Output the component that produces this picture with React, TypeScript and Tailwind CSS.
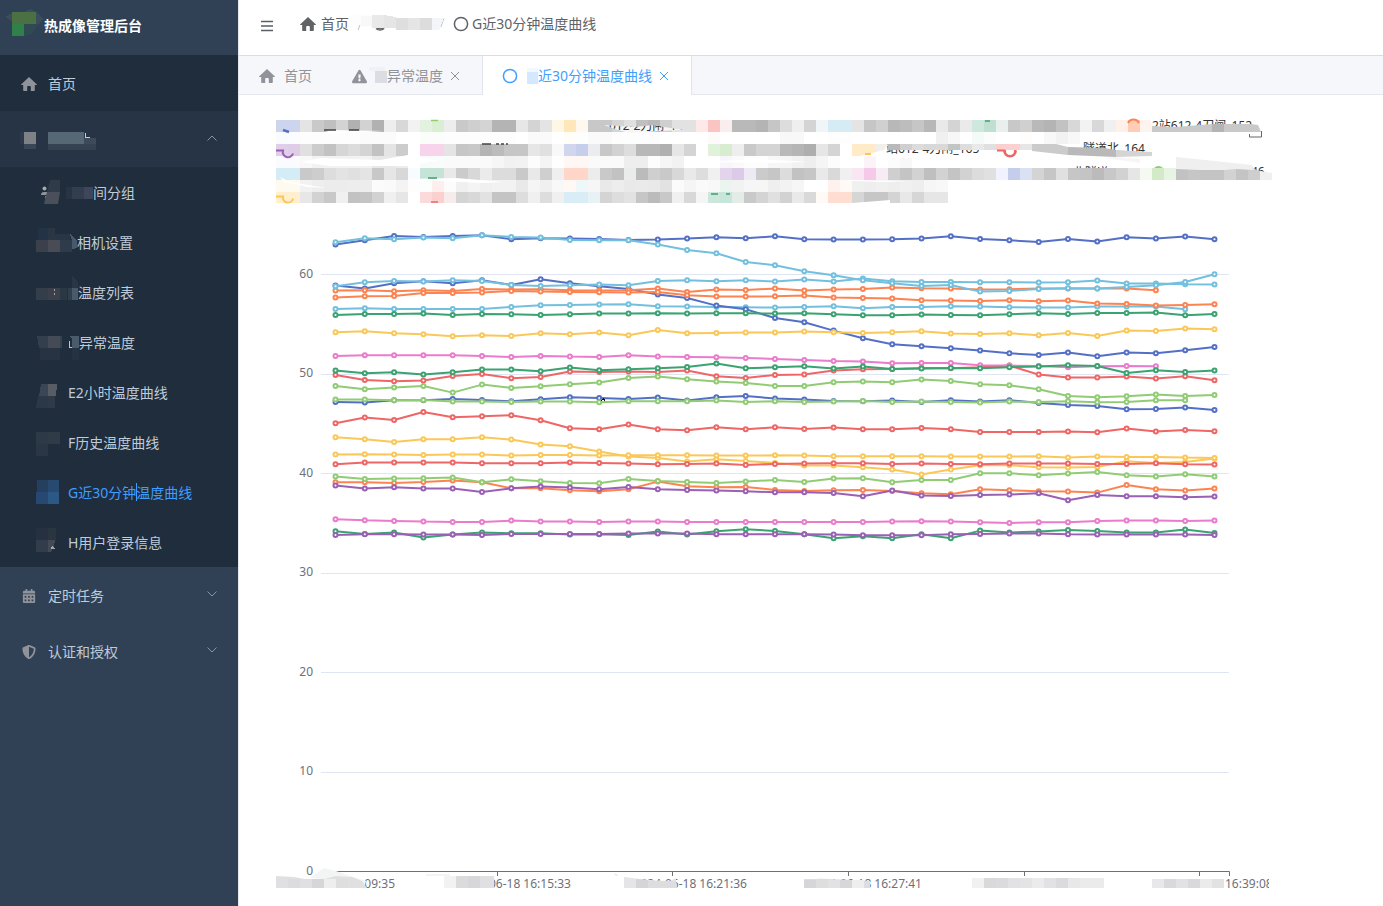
import React from "react";
import { FaExclamationTriangle, FaCalendarAlt, FaShieldAlt } from "react-icons/fa";

type Cell = [number, number, number, number, string];

function Mosaic({ box, cells, className, children }: { box: string; cells: Cell[]; className: string; children?: React.ReactNode }) {
  return (
    <svg viewBox={box} className={className} shapeRendering="crispEdges" aria-hidden="true">
      {cells.map(([x, y, w, h, fill], i) => (
        <rect key={i} x={x} y={y} width={w} height={h} fill={fill} />
      ))}
      {children}
    </svg>
  );
}

function House({ className }: { className: string }) {
  return (
    <svg viewBox="0 0 16 16" className={className} fill="currentColor" aria-hidden="true">
      <path d="M8 1 .3 8.200c-.4.4-.2.9.4.9H2.200v4.900c0 .6.4 1 1 1H6.200V10.800c0-.5.3-.8.8-.8h2c.5 0 .8.3.8.8V15h3c.6 0 1-.4 1-1V9.100h1.500c.6 0 .8-.5.4-.9z" />
    </svg>
  );
}

function Arrow({ up }: { up?: boolean }) {
  return (
    <svg
      viewBox="0 0 12 12"
      className={up ? "mb-0.5 ml-auto size-3 shrink-0 fill-none stroke-[#8b929d]" : "mb-1 ml-auto size-3 shrink-0 fill-none stroke-[#8b929d]"}
      aria-hidden="true"
    >
      <path d={up ? "M1.5 8.5 6 4l4.5 4.5" : "M1.5 3.5 6 8l4.5-4.5"} />
    </svg>
  );
}

function Close() {
  return (
    <svg viewBox="0 0 10 10" className="size-[10px] fill-none stroke-current" aria-hidden="true">
      <path d="M1 1l8 8M9 1L1 9" />
    </svg>
  );
}

function Ring({ className }: { className: string }) {
  return (
    <svg viewBox="0 0 16 16" className={className} fill="none" stroke="currentColor" strokeWidth="1.5" aria-hidden="true">
      <circle cx="8" cy="8" r="6.6" />
    </svg>
  );
}

const subItems: { label: string; box: string; size: string; cells: Cell[]; active?: boolean; extra?: React.ReactNode }[] = [
  {
    label: "间分组",
    box: "36 167 57 50",
    size: "h-[50px] w-[57px]",
    cells: [[66, 187, 6, 12, "#273443"], [72, 187, 12, 12, "#323e4d"], [84, 187, 12, 12, "#3d465a"]],
    extra: (
      <g shapeRendering="auto">
        <circle cx="44.5" cy="188.500" r="2" fill="#a5a8ad" />
        <path d="M41 195q0-3 3-3h4v3zM45 196h3l-1 4h-1z" fill="#8d949d" />
        <path d="M50 180h10v12H47z" fill="#303b49" />
        <path d="M47 192h13l-2 12H44z" fill="#4a505b" />
      </g>
    ),
  },
  {
    label: "相机设置",
    box: "36 217 41 50",
    size: "h-[50px] w-[41px]",
    cells: [[38, 228, 10, 12, "#243245"], [48, 228, 7, 12, "#2b3644"], [55, 234, 15, 6, "#273544"], [36, 240, 12, 12, "#3b414c"], [48, 240, 12, 12, "#494b57"], [60, 240, 12, 12, "#2e3b4a"]],
    extra: <path d="M70 234l7 6v8l-5 1v-9z" fill="#475a6b" />,
  },
  {
    label: "温度列表",
    box: "36 267 42 50",
    size: "h-[50px] w-[42px]",
    cells: [[36, 288, 12, 12, "#343e4a"], [48, 288, 12, 12, "#3b404a"], [60, 288, 7, 12, "#2c3744"], [68, 288, 4, 12, "#2f3f4e"], [72, 288, 8, 12, "#4b5a69"], [54, 289, 1, 2, "#a0a4aa"], [54, 293, 1, 2, "#a0a4aa"]],
    extra: <path d="M72 276l5 4 2 8h-7z" fill="#293646" />,
  },
  {
    label: "异常温度",
    box: "36 317 43 50",
    size: "h-[50px] w-[43px]",
    cells: [[48, 336, 12, 12, "#454b56"], [60, 336, 2, 12, "#344252"], [40, 348, 20, 12, "#273342"], [72, 348, 12, 12, "#243241"], [69, 341, 1, 7, "#bcc4cc"], [69, 347, 4, 1, "#bcc4cc"]],
    extra: (
      <>
        <path d="M37 336h11v12h-9z" fill="#333f4d" />
        <path d="M69 336h11l5 12H72v-10z" fill="#4a5b6b" />
      </>
    ),
  },
  {
    label: "E2小时温度曲线",
    box: "36 367 32 50",
    size: "h-[50px] w-8",
    cells: [[38, 396, 10, 12, "#2b3848"], [48, 396, 7, 12, "#2e3a48"]],
    extra: (
      <>
        <path d="M41 384h7v12h-9z" fill="#3a4655" />
        <path d="M48 384h9l-1 12h-8z" fill="#585c64" />
        <path d="M38 396h2l-2 12h-2z" fill="#2b3848" />
      </>
    ),
  },
  { label: "F历史温度曲线", box: "36 417 32 50", size: "h-[50px] w-8", cells: [[36, 432, 12, 12, "#2d3947"], [48, 432, 12, 12, "#303b48"], [36, 444, 12, 12, "#2a3645"]] },
  {
    label: "G近30分钟温度曲线",
    box: "36 467 32 50",
    size: "h-[50px] w-8",
    active: true,
    cells: [[37, 480, 11, 12, "#25405f"], [48, 480, 11, 12, "#294a70"], [36, 492, 12, 12, "#274873"], [48, 492, 11, 12, "#2c5885"]],
  },
  {
    label: "H用户登录信息",
    box: "36 517 32 50",
    size: "h-[50px] w-8",
    cells: [[36, 528, 12, 12, "#253141"], [48, 528, 8, 12, "#2a3542"], [36, 540, 12, 12, "#323c4b"]],
    extra: (
      <>
        <path d="M48 540h7l-1 6-3 6h-3z" fill="#454b56" />
        <path d="M51 549v-2l2-1 2 3z" fill="#a4a6aa" />
      </>
    ),
  },
];

function Sidebar() {
  return (
    <aside className="flex w-[238px] shrink-0 flex-col bg-[#304156] text-sm text-[#bfcbd9]">
      <div className="flex h-[55px] items-center">
        <Mosaic box="0 0 44 55" className="h-[55px] w-11" cells={[[12, 12, 24, 12, "#4a7044"], [12, 24, 12, 12, "#308049"]]}>
          <path d="M5 17l7-4v8zM24 12l6-3 6 3zM36 12l7 7-7 7z" fill="#3a4d5b" />
          <path d="M24 24h14l-6 10-8 2z" fill="#304a53" />
        </Mosaic>
        <h1 className="pb-[3px] text-sm font-bold text-white">热成像管理后台</h1>
      </div>
      <nav className="flex flex-col">
        <a href="#home" className="flex h-14 items-center bg-[#1f2d3d] px-[21px] pt-0.5">
          <House className="mr-[11px] size-4 text-[#909399]" />
          首页
        </a>
        <button type="button" aria-label="展开菜单" className="flex h-14 items-center bg-[#263445] pr-5">
          <Mosaic box="0 111 120 56" className="h-14 w-[120px]" cells={[[20, 132, 4, 12, "#2d3a4b"], [24, 132, 12, 12, "#7e8186"], [24, 144, 12, 5, "#3a4655"], [48, 132, 36, 12, "#566776"], [48, 144, 48, 6, "#344252"], [84, 138, 12, 6, "#3c4a59"], [85, 133, 1, 5, "#c5ced8"], [86, 137, 4, 1, "#c5ced8"]]} />
          <Arrow up />
        </button>
        <ul className="bg-[#1f2d3d]">
          {subItems.map((it) => (
            <li key={it.label}>
              <a href="#page" className={it.active ? "flex h-[50px] items-center pl-9 text-[#409eff]" : "flex h-[50px] items-center pl-9"}>
                <Mosaic box={it.box} className={it.size} cells={it.cells}>
                  {it.extra}
                </Mosaic>
                <span className="relative pt-0.5">
                  {it.label}
                  {it.active && <span className="absolute top-0.5 left-[68px] h-[18px] w-px bg-[#409eff]" />}
                </span>
              </a>
            </li>
          ))}
        </ul>
        <button type="button" className="flex h-14 items-center pt-0.5 pr-5 pl-[21px]">
          <FaCalendarAlt className="mr-[11px] h-[14px] w-4 text-[#909399]" />
          定时任务
          <Arrow />
        </button>
        <button type="button" className="flex h-14 items-center pt-0.5 pr-5 pl-[21px]">
          <FaShieldAlt className="mr-[11px] h-[14px] w-4 text-[#909399]" />
          认证和授权
          <Arrow />
        </button>
      </nav>
    </aside>
  );
}

/* Chart geometry */
const X0 = 335.5;
const STEP = 29.3;
const ZERO_Y = 871;
const PER_DEGREE = 9.953;
const TOP_DEGREE = 65.38;
const blue = "#5470c6";
const sky = "#73c0de";
const orange = "#fc8452";
const green = "#3ba272";
const lime = "#91cc75";
const yellow = "#fac858";
const red = "#ee6666";
const pink = "#ea7ccc";
const purple = "#9a60b4";

/* Readings are counted in steps of 1/29.86 degree below TOP_DEGREE. */
const toY = (r: number) => ZERO_Y - (TOP_DEGREE - r / 29.86) * PER_DEGREE;

const series: [string, number[]][] = [
  [blue, [73, 60, 47, 50, 47, 45, 57, 54, 55, 56, 59, 58, 55, 51, 54, 48, 57, 58, 58, 57, 55, 48, 56, 60, 65, 56, 64, 51, 55, 49, 57]],
  [sky, [266, 264, 266, 266, 266, 266, 260, 255, 254, 253, 252, 258, 259, 260, 261, 262, 260, 258, 264, 260, 260, 258, 259, 261, 262, 262, 259, 259, 259, 267]],
  [blue, [196, 205, 189, 183, 189, 180, 194, 177, 189, 198, 206, 223, 233, 256, 267, 293, 306, 331, 354, 372, 378, 384, 391, 399, 404, 397, 408, 397, 399, 390, 380]],
  [yellow, [336, 333, 339, 342, 348, 345, 347, 339, 342, 337, 345, 329, 339, 338, 337, 337, 334, 336, 338, 336, 333, 340, 341, 339, 345, 338, 347, 331, 332, 325, 327]],
  [orange, [211, 210, 213, 210, 212, 206, 208, 207, 210, 211, 210, 205, 215, 208, 209, 205, 211, 208, 206, 202, 204, 205, 208, 207, 205, 205, 205, 205, 210]],
  [orange, [232, 228, 227, 218, 218, 217, 212, 214, 215, 216, 217, 215, 225, 229, 229, 228, 226, 232, 233, 235, 240, 241, 242, 240, 243, 241, 250, 251, 256, 254, 252]],
  [sky, [198, 186, 182, 184, 180, 182, 194, 197, 195, 193, 195, 182, 180, 183, 180, 184, 178, 184, 175, 183, 185, 185, 186, 186, 187, 186, 181, 190, 190, 192, 193]],
  [sky, [66, 54, 57, 52, 54, 45, 50, 52, 59, 60, 60, 73, 89, 99, 125, 135, 153, 165, 180, 189, 197, 194, 214, 212, 206, 204, 205, 200, 195, 185, 162]],
  [green, [284, 281, 281, 280, 284, 281, 282, 284, 282, 280, 280, 279, 280, 279, 279, 280, 279, 282, 285, 285, 283, 284, 285, 282, 279, 281, 278, 278, 277, 285, 281]],
  [red, [464, 479, 483, 481, 467, 461, 474, 470, 454, 455, 454, 455, 451, 468, 473, 464, 463, 451, 447, 446, 443, 444, 441, 436, 463, 472, 472, 469, 475, 468, 480]],
  [pink, [407, 405, 405, 405, 405, 407, 410, 407, 409, 410, 405, 409, 410, 411, 413, 416, 419, 422, 424, 429, 428, 428, 435, 436, 437, 441, 438, 437, 438]],
  [green, [451, 459, 456, 463, 456, 448, 448, 453, 442, 450, 447, 444, 440, 430, 444, 441, 438, 445, 439, 446, 445, 443, 444, 441, 439, 435, 437, 458, 450, 455, 451]],
  [lime, [497, 507, 502, 497, 517, 493, 503, 498, 492, 487, 473, 469, 477, 484, 488, 497, 497, 486, 484, 486, 478, 482, 492, 495, 507, 527, 531, 528, 523, 527, 524]],
  [blue, [545, 547, 540, 540, 536, 539, 543, 537, 531, 533, 536, 532, 541, 531, 527, 535, 538, 542, 543, 541, 545, 540, 544, 540, 548, 554, 557, 567, 566, 562, 569]],
  [lime, [538, 538, 540, 539, 544, 544, 545, 544, 544, 546, 543, 543, 543, 541, 545, 543, 545, 544, 542, 545, 544, 545, 547, 544, 545, 543, 546, 545, 540, 540]],
  [red, [609, 592, 599, 575, 591, 588, 585, 600, 624, 627, 613, 627, 630, 621, 627, 621, 626, 622, 627, 627, 623, 627, 635, 635, 635, 634, 636, 625, 634, 629, 633]],
  [yellow, [651, 657, 665, 657, 657, 651, 658, 673, 678, 694, 709, 713, 724, 717, 722, 728, 736, 736, 741, 748, 763, 748, 735, 735, 741, 742, 740, 723, 728, 725, 715]],
  [yellow, [703, 702, 703, 704, 703, 703, 706, 704, 704, 706, 705, 705, 705, 706, 706, 705, 706, 708, 708, 708, 708, 709, 709, 709, 708, 712, 709, 710, 710, 712, 713]],
  [red, [732, 727, 727, 727, 727, 729, 729, 729, 727, 728, 730, 732, 731, 730, 734, 731, 730, 729, 729, 731, 730, 731, 732, 730, 730, 730, 731, 731, 729, 732, 733]],
  [orange, [786, 786, 788, 785, 781, 786, 804, 804, 810, 813, 807, 784, 798, 801, 800, 809, 812, 810, 809, 812, 819, 822, 807, 810, 813, 814, 817, 794, 807, 811, 805]],
  [lime, [769, 776, 775, 774, 772, 786, 777, 783, 788, 789, 776, 782, 785, 788, 784, 779, 785, 775, 774, 786, 779, 779, 759, 759, 765, 760, 755, 765, 769, 762, 769]],
  [purple, [796, 805, 801, 805, 805, 815, 804, 799, 802, 807, 800, 807, 809, 811, 813, 816, 816, 818, 828, 811, 826, 827, 824, 823, 819, 840, 824, 828, 828, 831, 829]],
  [pink, [897, 900, 902, 904, 905, 905, 901, 904, 904, 905, 904, 904, 905, 905, 905, 905, 905, 905, 905, 904, 903, 904, 906, 908, 906, 906, 902, 901, 901, 902, 901]],
  [green, [933, 941, 937, 952, 943, 937, 939, 939, 943, 942, 944, 934, 943, 933, 927, 932, 942, 954, 948, 954, 942, 954, 931, 937, 934, 929, 932, 937, 937, 928, 938]],
  [purple, [944, 942, 942, 943, 943, 944, 941, 941, 941, 941, 940, 940, 940, 942, 942, 942, 942, 943, 945, 945, 945, 942, 941, 940, 940, 942, 943, 943, 943, 943, 944]],
];

/* Legend blocks, 12 units square; two digits are a grey level, six a colour. */
const legendRows: [number, number, string][] = [
  [120, 12, "cdd4ee cdd4ee e4 c9 bf d3 b1 d2 b1 ee d8 f2 e3f2de daeed2 ed c9 cf d4 b4 b4 e7 d4 e4 fff7e6 ffe7b9 fff8ee c8 c8 d4 e0 c0 b8 cf e2 e2 ffe9e8 f9c4c2 f9eeed b9 b9 b4 c6 dd ef d4 f0f5f7 d6ecf4 d6ecf4 e4 c6 d0 b8 bd c6 b7 e9 d4 ea cfe8dd bfe0d0 e8efec c8 d0 b9 b4 c2 d8 f2 d8 f0 fff0ea ffcdb6 fdf3ef"],
  [132, 12, "fafbff fbfcff fd fd fd fd fd fb fb fb ff ff fbfdfb fafdfa fd fd fd fd fd fd ff fa fa ff fffdf8 fd fa fa fd fd fd fc ff ff ff ff fffafa ff ff ff ff ff f8 f8 ff ff fd fd ff ff ff ff ff ff ff f0 f7 ff f4faf7 fafdfc ff ff fffcfc ff f8 f2 f8"],
  [144, 12, "dfcfe8 dfcce6 e0 cc c2 d6 dc d4 c2 e4 cc ff f7d3ec f7d3ec e4 c6 c8 b4 bb c6 c6 e6 e0 f8 d0d6ed c5ceea eaecf0 c8 d2 dd b8 b8 b0 e6 d4 ff e0f2da d8edcf ee c9 d4 d4 b9 b5 ae e6 d4 ff ffebc8 ffebc8 f0efec"],
  [156, 12, "fafbff fafbff f8 f2 f2 f2 f2 f2 e8 e8 ec ff f8fbfc f8fcfb fa fa fa fa f6 f1 f2 fc f4 fe fff7f3 fff7f3 fa fa fa ee ee fd f6 f2 ff ff ff f8f6fa fa fd fd f7 f6 f2 ee f5 fc ff ff fbf3f8 ff fc f8"],
  [168, 12, "d4ecf5 d4ecf5 c9 cd dd e3 e0 e4 c8 e6 d8 f8fcff c6e3d7 c6e3d7 e9 cb d8 eb dc dc c9 e9 cf ef ffd6c8 ffd6c8 ec c9 c2 e9ecea bb cf c9 d8 e9 dd f0 e2d4ea dccbe8 eeeaf4 cb c6 dc c2 c6 e9 d9 f0 fae6f3 f7c9e9 f7ebf4 cf c4 d2 bf d2 c4 d2 dc e0 f0f3ff c4cdec dbe1f5 d4 c6 e0 c6 c4 bb c8 d2 e6 f4f9f2 d3eac8 e7f3e3 c2 c6 c4 c4 d2 c4 ce f0"],
  [180, 12, "fffaf0 fffaf0 f2 ee ec ec ed ed fb fa f4 fd fcfdfd ffeeee fc f0 f4 f0 f2 f2 e9 f5 f0 f8 fff8f4 eef8fb f6 e9 ed e9 ea e9 e2 fb f5 fa f8 eaf5f0 f2 f6 f6 ef f2 f6 ff ff fff2ee fffaf6 f0 ee f0 ee f0 ee f6 f8"],
  [192, 11, "ffefcc ffefcf e7 d2 c8 f0 c2 c4 d2 f0 e6 ff fddada fbd0cf f5eceb d4 d8 e2 c4 c4 dd f0 dd f0 d9edf6 d9edf6 e8f2f5 d4 dd e2 c6 bb c8 f0 d8 f5 cde7dc c8e5d9 e4ece8 c9 d4 e0 d2 e9 d9 fffaf6 ffddd0 ffddd0 d6 c6 c6 d4 e8 d6 e6 e6"],
];

const hex = (c: string) => (c.length === 2 ? `#${c}${c}${c}` : `#${c}`);

function Blocks({ x, y, w = 12, h, colors }: { x: number; y: number; w?: number; h: number; colors: string }) {
  return (
    <>
      {colors.split(" ").map((c, i) => (
        <rect key={i} x={x + i * w} y={y} width={w} height={h} fill={hex(c)} />
      ))}
    </>
  );
}

function Legend() {
  return (
    <g>
      <g fontSize="12" fill="#333">
        <text x="1152" y="130">2站612-4刀闸_152</text>
        <text x="1083" y="153">隧道北_164</text>
        <text x="886" y="153">站612-4刀闸_165</text>
        <text x="1073" y="177">北隧道</text>
        <text x="1176" y="176">Bkm</text>
        <text x="1251" y="176">46</text>
      </g>
      <g fill="none" strokeWidth="2">
        <circle cx="1133.500" cy="125.500" r="5" stroke={orange} />
        <circle cx="1010" cy="151" r="5" stroke={red} />
        <circle cx="1158.500" cy="172" r="5" stroke={lime} />
      </g>
      <path d="M1249.500 134v3h12v-6" fill="none" stroke="#666" />
      <clipPath id="legend-shape">
        <path d="M276 120H1150L1152 127L1220 125L1250 121L1258 122L1261 131L1220 135H1130V144H1032L1076 144L1150 152V156L1140 162L1050 156L1000 151H996V144H980L888 144L884 150L860 156L1000 162L1100 168H1180L1176 159L1250 163L1256 170L1260 171L1272 173V180H948V203H890V200L840 204H276Z" />
      </clipPath>
      <g clipPath="url(#legend-shape)" shapeRendering="crispEdges">
        {legendRows.map(([y, h, colors]) => (
          <Blocks key={y} x={276} y={y} h={h} colors={colors} />
        ))}
      </g>
      <g shapeRendering="crispEdges">
        <Blocks x={888} y={144} h={6} colors="b9 cf dc d8 d9 c4 dd e9 e0 fbcfce fad0d0 e6" />
      </g>
      <path d="M1032 144h24l12 3v8l-36-4z" fill="#cbcbcb" />
      <path d="M1068 147l36 1 12 2v7l-48-2z" fill="#b9b9b9" />
      <path d="M1116 150l36 2v4l-36 1z" fill="#d4d4d4" />
      <path d="M1116 157l24 2v4l-36-5z" fill="#f6f6f6" />
      <path d="M1176 157l48 5 28 3 2 5-18-1-12 1h-24l-24-1z" fill="#efefef" />
      <path d="M1152 126l24 1 36-3h39l7 1 3 7h-109z" fill="#c9c9c9" />
      <path d="M1212 124h12v8h-12z" fill="#b4b4b4" />
      <clipPath id="legend-gap">
        <path d="M604 125l30 2 20-2 10 2 20 3-24 1-30 2-12-3z" />
      </clipPath>
      <g clipPath="url(#legend-gap)">
        <rect x="600" y="122" width="90" height="12" fill="#f6f6f6" />
        <text x="609" y="130" fontSize="12" fill="#333">
          012-2刀闸_14
        </text>
      </g>
      <path d="M330 130l54 1-52 3-8-1zM300 162l20-4 60 2 28-5 30 5-28 6H330z" fill="#fff" />
      <path d="M406 179l50-1 48 4-20 1-66-3zM280 177l10 5 36 6-18-1-24-5z" fill="#fff" />
      <path d="M706 162l50-3 52 3-40 1zM848 180l60 1-20 1-40-1zM804 137l88-1-40 2z" fill="#fff" />
      <g fill="none" strokeWidth="1.500">
        <path d="M283 130l6 2" stroke={blue} strokeWidth="2.500" />
        <path d="M276 150.500h7a5 5 0 0 0 10 3" stroke={purple} strokeWidth="2" />
        <path d="M276 196.500h7a5 5 0 0 0 10 2" stroke={yellow} strokeWidth="2" />
        <path d="M431 120.500h7" stroke={lime} />
        <path d="M428 178h9M711 194h7M726 194h4M985 121h5" stroke={green} />
        <path d="M997 150.500h7a6 6 0 0 0 12 0" stroke={red} strokeWidth="2" />
        <path d="M431 202h7" stroke={red} />
        <path d="M1128 123a6 6 0 0 1 11 0" stroke={orange} strokeWidth="2" />
        <path d="M865 154h6" stroke={yellow} strokeWidth="2" />
        <path d="M324 130h12M349 130h10M482 144h9M496 144h3M501 144h3M506 144h2" stroke="#444" />
      </g>
    </g>
  );
}

function Chart() {
  return (
    <svg viewBox="276 115 996 785" className="h-auto w-full" role="img" aria-label="G近30分钟温度曲线">
      <Legend />
      {[10, 20, 30, 40, 50, 60].map((v) => {
        const y = Math.round(ZERO_Y - v * PER_DEGREE + 0.2) + 0.5;
        return <path key={v} d={`M321 ${y}H1229`} stroke="#e0e6f1" />;
      })}
      <g fontSize="12" fill="#6e7079" textAnchor="end">
        {[0, 10, 20, 30, 40, 50, 60].map((v) => (
          <text key={v} x="313" y={Math.round(ZERO_Y - v * PER_DEGREE + 4)}>
            {v}
          </text>
        ))}
      </g>
      <path d="M336 871.500H1229.500V876M497.500 871v5M672.500 871v5M848.500 871v5M1024.500 871v5M1199.500 871v5" fill="none" stroke="#6e7079" />
      {series.map(([color, readings], s) => (
        <g key={s} stroke={color}>
          <polyline fill="none" strokeWidth="2" strokeLinejoin="bevel" points={readings.map((r, i) => `${X0 + i * STEP},${toY(r)}`).join(" ")} />
          {readings.map((r, i) => (
            <circle key={i} cx={X0 + i * STEP} cy={toY(r)} r="2" fill="#fff" strokeWidth="2" />
          ))}
        </g>
      ))}
      <path d="M602 399.500h3M603 398.500h1M601 400.500h1M604 400.500h1" stroke="#111" />
      <clipPath id="axis-clip">
        <rect x="276" y="872" width="993" height="20" />
      </clipPath>
      <g fontSize="12" fill="#6e7079" clipPath="url(#axis-clip)">
        <text x="395" y="888" textAnchor="end">:09:35</text>
        <text x="571" y="888" textAnchor="end">2024-06-18 16:15:33</text>
        <text x="747" y="888" textAnchor="end">2024-06-18 16:21:36</text>
        <text x="922" y="888" textAnchor="end">2024-06-18 16:27:41</text>
        <text x="1225" y="888">16:39:08</text>
      </g>
      <path d="M310 878l14-10 12 3 30 10-2 8-30-9z" fill="#f3f4f4" />
      <path d="M276 876l18 1 22 4 20-5 16 1 10 4 5 7H276z" fill="#e0e0e2" />
      <g shapeRendering="crispEdges">
        <Blocks x={288} y={879} h={9} colors="dcdcdf e0e0e2 d6d6d9 eeeeef dededf" />
        <rect x="426" y="874" width="24" height="2" fill="#f3f4f4" />
        <rect x="450" y="876" width="44" height="12" fill="#fff" />
        <Blocks x={444} y={876} h={12} colors="f2f2f3 dbdbde d7d7da e0e0e2" />
        <rect x="492" y="876" width="2" height="12" fill="#e0e0e2" />
      </g>
      <path d="M614 873l4 2-2 1zM624 877l24 3 22 1 6-3v10h-52z" fill="#e5e5e8" />
      <path d="M636 879l12 1v8h-12z" fill="#d5d5d8" />
      <path d="M648 881h28l1 7h-29zM804 878l50 2 16 1v7h-66z" fill="#dddde0" />
      <g shapeRendering="crispEdges">
        <rect x="624" y="873" width="23" height="4" fill="#fff" />
        <rect x="804" y="873" width="14" height="6" fill="#fff" />
        <Blocks x={804} y={880} h={8} colors="d6d6d9 dededf e2e2e4 d7d7da eeeeef" />
        <Blocks x={972} y={878} h={10} colors="f1f1f2 d9d9dc dbdbdd e2e2e4 e4e4e7 ebebec e2e2e4 dbdbdd e8e8ea ebebec ebebec" />
        <Blocks x={1152} y={879} h={9} colors="e8e8ea d9d9dc e2e2e4 d9d9dc ebebec e2e2e4" />
      </g>
    </svg>
  );
}

export default function App() {
  return (
    <div className="flex min-h-screen bg-white font-['Noto_Sans','Noto_Sans_CJK_SC',sans-serif] text-sm">
      <Sidebar />
      <div className="flex min-w-0 flex-1 flex-col border-l border-[#e4e7ed]">
        <header className="flex h-14 items-center border-b border-[#d8dce5] px-[21px] pb-2 text-[#606266]">
          <button type="button" aria-label="折叠菜单" className="mt-1 mr-[26px]">
            <svg viewBox="0 0 14 14" className="size-[14px] stroke-[#5a5e66]" strokeWidth="1.5" aria-hidden="true">
              <path d="M1 2.500h12M1 7h12M1 11.500h12" />
            </svg>
          </button>
          <nav className="flex items-center" aria-label="面包屑">
            <a href="#home" className="flex items-center gap-[5px]">
              <House className="size-4" />
              首页
            </a>
            <Mosaic
              box="349 10 104 28"
              className="h-7 w-[104px]"
              cells={[[349, 15, 23, 12, "#fdfdfd"], [361, 16, 11, 10, "#f8f8f8"]]}
            >
              <path d="M375 25a6 6 0 0 0 10 2" fill="none" stroke="#606266" strokeWidth="1.500" shapeRendering="auto" />
              <path d="M358 30l2-5M441 27l3-9" fill="none" stroke="#c0c4cc" shapeRendering="auto" />
              <path d="M372 15h12v13h-12z" fill="#e9e9ea" />
              <path d="M384 15l12 2v11h-12zM408 18h12v12h-12z" fill="#e5e5e6" />
              <path d="M396 18h12v12h-12z" fill="#dededf" />
              <path d="M420 18h12v12h-12z" fill="#dcdcdd" />
              <path d="M432 18h12l-5 12h-7z" fill="#f3f5f9" />
              <path d="M376 28.500a6 6 0 0 0 8 0" fill="none" stroke="#606266" strokeWidth="1.500" shapeRendering="auto" />
            </Mosaic>
            <span className="flex items-center gap-[3px]">
              <Ring className="size-4" />
              G近30分钟温度曲线
            </span>
          </nav>
        </header>
        <nav className="flex h-[39px] items-stretch bg-[#f5f7fa] text-[#909399]" aria-label="标签页">
          <a href="#home" className="flex items-center gap-[9px] border-b border-[#e4e7ed] pt-0.5 pr-5 pl-5">
            <House className="size-4" />
            首页
          </a>
          <div className="flex items-center border-b border-[#e4e7ed] pt-0.5 pr-[22px] pl-5">
            <FaExclamationTriangle className="size-[15px]" />
            <Mosaic box="368 60 20 32" className="h-8 w-5" cells={[[376, 71, 12, 12, "#dcdde2"], [370, 67, 16, 4, "#f0f1f4"]]} />
            <a href="#page">异常温度</a>
            <button type="button" aria-label="关闭" className="ml-[7px]">
              <Close />
            </button>
          </div>
          <div className="flex items-center border-x border-[#dfe4ed] bg-white pr-[22px] pl-[19px] text-[#409eff]">
            <Ring className="size-4" />
            <Mosaic box="518 60 20 32" className="h-8 w-5" cells={[[527, 68, 12, 4, "#f3f7ff"], [527, 72, 12, 12, "#d4e8ff"]]} />
            <a href="#page" aria-current="page">近30分钟温度曲线</a>
            <button type="button" aria-label="关闭" className="ml-[7px]">
              <Close />
            </button>
          </div>
          <div className="flex-1 border-b border-[#e4e7ed]" />
        </nav>
        <main className="pt-5 pr-[111px] pl-[37px]">
          <Chart />
        </main>
      </div>
    </div>
  );
}
